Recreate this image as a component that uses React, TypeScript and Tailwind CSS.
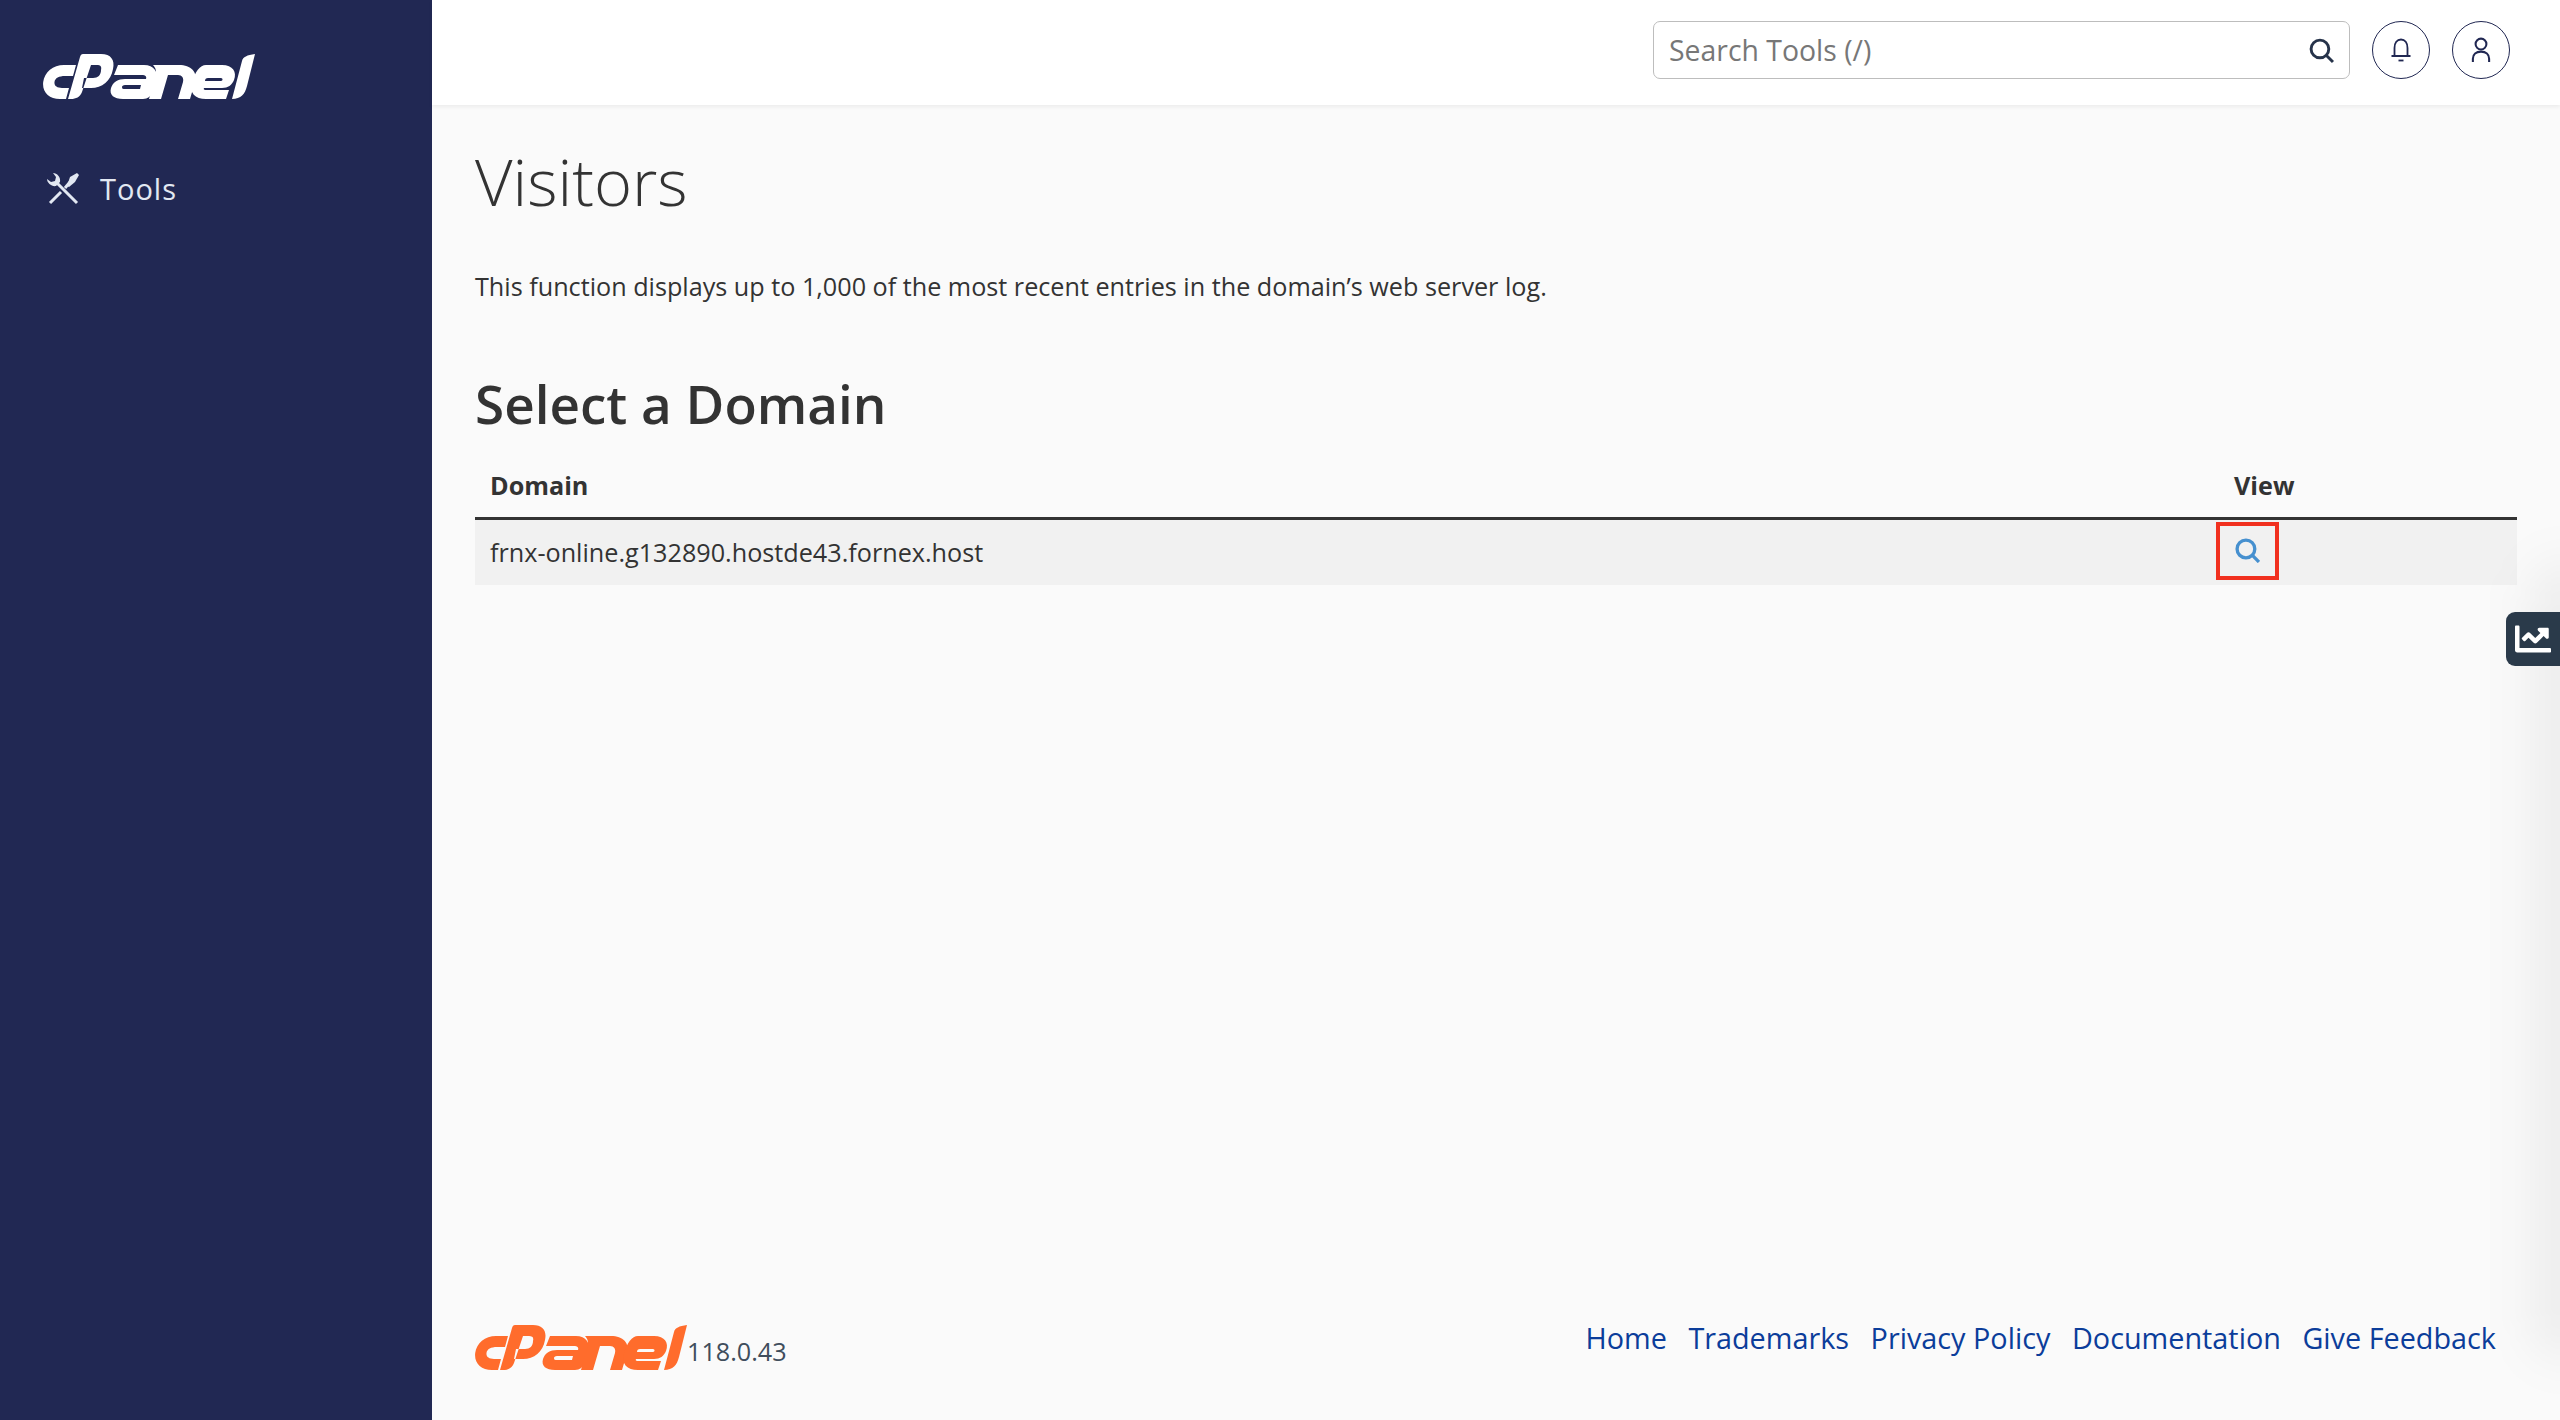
import { FaChartLine } from 'react-icons/fa';

const FOOTER_LINKS = ['Home', 'Trademarks', 'Privacy Policy', 'Documentation', 'Give Feedback'];

function CpanelLogo({ className }: { className: string }) {
  return (
    <svg viewBox="0 0 212 45" className={className} fill="currentColor" fillRule="evenodd">
      {/* c */}
      <path d="M33 11 L30 22 H22 C16 22 12 24 11.500 28 C11 32 14 34 19 34 H26 L23 45 H17 C6 45 -1 38 0.200 28 C1.500 18 10 11 21 11 Z" />
      {/* P */}
      <path d="M40 0 H58 C68 0 72 6 70 15 C68 27 59 34 48 34 H39 L41 24 H50 C55 24 58 21 58 16 C59 12 57 11 54 11 H48 L39 38 C37 43 33 45 28 45 H25 L37 3 C37.500 1 38.500 0 40 0 Z" />
      {/* a */}
      <path d="M75 11 H101 C111 11 116 18 113 27 L110 37 C108 42 105 45 100 45 H80 C71 45 66 41 68 34 C70 28 75 25 82 25 H103 C104 22 102 21 99 21 H71 Z M82 31 C80 31 79 32 79 33 C79 35 80 35 82 35 H97 L98 31 Z" />
      {/* n */}
      <path d="M110 11 H136 C148 11 155 18 152 28 L147 45 H135 L140 28 C141 24 139 21 135 21 H125 L118 45 H106 L113 20 C113.500 16 112 13 110 11 Z" />
      {/* e */}
      <path d="M163 11 H179 C190 11 194 18 191 26 C189 31 185 34 179 34 H161 C160 36 162 36 165 36 H186 L183 45 H163 C152 45 146 39 149 28 C152 18 157 11 163 11 Z M165 24 C163 24 162 25 162 27 H178 C180 27 180 24 178 24 Z" />
      {/* l */}
      <path d="M212 0 L204 32 C202 40 198 45 189 45 L199 7 C200 3 204 1 212 0 Z" />
    </svg>
  );
}

function ToolsIcon() {
  return (
    <svg viewBox="0 0 32 32" className="h-[32px] w-[32px] text-[#e2e8f2]" fill="none" stroke="currentColor" strokeWidth="3">
      <path d="M3 30 L14 19" />
      <path d="M18 15 L23 9" />
      <path d="M20 13 L23 4 L30 0 L32 2 L28 9 L22 14 Z" fill="currentColor" stroke="none" />
      <path d="M30 30 L10 10" />
      <path d="M0 6 L4 9 L8 8 L9 4 L6 0 C10 0 14 4 13 9 L9 13 C5 14 0 10 0 6 Z" fill="currentColor" stroke="none" />
    </svg>
  );
}

function SearchGlyph({ className, strokeWidth }: { className: string; strokeWidth: string }) {
  return (
    <svg viewBox="0 0 24 24" className={className} fill="none" stroke="currentColor" strokeWidth={strokeWidth}>
      <circle cx="10.500" cy="10.500" r="8.500" />
      <path d="M16.500 16.500 L23 23" />
    </svg>
  );
}

export default function App() {
  return (
    <div className="relative flex h-[1420px] w-full overflow-hidden font-['Open_Sans',sans-serif] text-[#333333]">
      <aside className="flex w-[432px] shrink-0 flex-col bg-[#212853] pl-[43px]">
        <CpanelLogo className="mt-[54px] h-[45px] w-[212px] text-white" />
        <a className="mt-[70px] flex items-center pl-[4px] text-[#e2e8f2]">
          <ToolsIcon />
          <span className="ml-[21px] text-[29px] leading-[40px] tracking-[1px]">Tools</span>
        </a>
      </aside>

      <div className="flex min-w-0 flex-1 flex-col bg-[#fafafa]">
        <header className="flex h-[105px] shrink-0 items-start justify-end bg-white pr-[50px] pt-[21px] shadow-[0_2px_4px_rgba(0,0,0,0.06)]">
          <div className="flex h-[58px] w-[697px] items-center justify-between rounded-[7px] border border-[#bdbdbd] pl-[15px] pr-[15px] text-[28.400px] text-[#777777]">
            <span>Search Tools (/)</span>
            <SearchGlyph className="h-[25px] w-[25px] text-[#26334a]" strokeWidth="2.800" />
          </div>
          <button className="ml-[22px] flex h-[58px] w-[58px] items-center justify-center rounded-full border border-[#202752] text-[#202752]">
            <svg viewBox="0 0 24 24" className="h-[24px] w-[24px]" fill="none" stroke="currentColor" strokeWidth="1.800">
              <path d="M2.500 18 H21.500 M5.500 18 V10 C5.500 5 8 1.500 12 1.500 C16 1.500 18.500 5 18.500 10 V18" />
              <path d="M9.500 22.500 H14.500" />
            </svg>
          </button>
          <button className="ml-[22px] flex h-[58px] w-[58px] items-center justify-center rounded-full border border-[#202752] text-[#202752]">
            <svg viewBox="0 0 24 24" className="h-[26px] w-[26px]" fill="none" stroke="currentColor" strokeWidth="1.900">
              <circle cx="12" cy="6.500" r="5" />
              <path d="M4.500 23 V20 C4.500 16 7.500 13.500 12 13.500 C16.500 13.500 19.500 16 19.500 20 V23" />
            </svg>
          </button>
        </header>

        <main className="flex min-h-0 flex-1 flex-col px-[43px]">
          <h1 className="mt-[32px] text-[65px] font-light leading-[88px]">Visitors</h1>
          <p className="mt-[43px] text-[25.200px] leading-[36px]">
            This function displays up to 1,000 of the most recent entries in the domain’s web server log.
          </p>
          <h2 className="mt-[65px] text-[53px] font-semibold leading-[70px]">Select a Domain</h2>

          <div className="mt-[19px]">
            <div className="flex h-[62px] items-center border-b-[3px] border-[#333333] pb-[4px] text-[25.200px] font-bold">
              <div className="flex-1 pl-[15px]">Domain</div>
              <div className="w-[301px] pl-[18px]">View</div>
            </div>
            <div className="flex h-[65px] items-center bg-[#f1f1f1] text-[25.200px]">
              <div className="flex-1 pl-[15px]">frnx-online.g132890.hostde43.fornex.host</div>
              <div className="w-[301px]">
                <button className="-mt-[4px] flex h-[58px] w-[63px] items-center justify-center border-4 border-[#f1301f] text-[#4690cf]">
                  <SearchGlyph className="h-[25px] w-[25px]" strokeWidth="3.200" />
                </button>
              </div>
            </div>
          </div>

          <footer className="mt-auto mb-[50px] flex items-end justify-between pr-[21px]">
            <div className="flex items-end">
              <CpanelLogo className="h-[45px] w-[212px] text-[#ff6c2c]" />
              <span className="mb-[1px] text-[25.200px] leading-[36px] text-[#3f4d5c]">118.0.43</span>
            </div>
            <nav className="mb-[12px] flex gap-[21.500px] text-[28.800px] leading-[40px] text-[#0b3d9a]">
              {FOOTER_LINKS.map((link) => (
                <a key={link}>{link}</a>
              ))}
            </nav>
          </footer>
        </main>
      </div>

      <div className="pointer-events-none absolute -right-[40px] top-[560px] h-[800px] w-[70px] rounded-full bg-black/5 blur-xl" />

      <div className="absolute right-0 top-[612px] flex h-[54px] w-[54px] items-center justify-center rounded-l-[9px] bg-[#2a3a4a] text-white">
        <FaChartLine className="h-[36px] w-[36px]" />
      </div>
    </div>
  );
}
